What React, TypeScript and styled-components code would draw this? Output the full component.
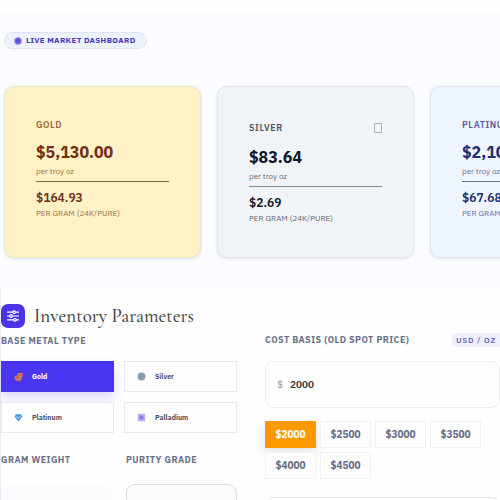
import React, { useState } from "react";
import styled, { createGlobalStyle, css } from "styled-components";

const GlobalStyle = createGlobalStyle`
  * { box-sizing: border-box; }
  body {
    margin: 0;
    background: #fefefe;
    font-family: "IBM Plex Sans", "Noto Sans", sans-serif;
  }
  button, input, select { font-family: inherit; }
`;

const Page = styled.main`
  height: 100vh;
  overflow: hidden;
  padding-top: 12px;
`;

const Market = styled.section`
  display: flex;
  flex-direction: column;
  align-items: flex-start;
  padding: 20px 0 29px 4px;
  background: #fbfcff;
`;

const LiveBadge = styled.div`
  display: flex;
  align-items: center;
  gap: 4px;
  height: 17px;
  padding: 0 10px 0 9px;
  border: 1px solid #dfe4f3;
  border-radius: 9px;
  background: #eef2ff;
  color: #4338b0;
  font-size: 8px;
  line-height: 15px;
  font-weight: 700;
  letter-spacing: 0.04em;
`;

const Dot = styled.span`
  width: 8px;
  height: 8px;
  border: 1px solid #a8a5f1;
  border-radius: 50%;
  background: #5b54dc;
`;

const CardTrack = styled.div`
  display: flex;
  gap: 16px;
  margin-top: 37px;
`;

type Tone = { bg: string; edge: string; label: string; price: string; muted: string; rule: string };

const tones: Record<string, Tone> = {
  gold: { bg: "#fdf1c5", edge: "#eee6cf", label: "#9b6337", price: "#712f14", muted: "#9b7047", rule: "#82694a" },
  silver: { bg: "#f0f4f9", edge: "#e2e6ea", label: "#4c5160", price: "#0e1629", muted: "#62666f", rule: "#858991" },
  platinum: { bg: "#eef5ff", edge: "#dfe5ec", label: "#565f9b", price: "#1e2f72", muted: "#6870a6", rule: "#707584" },
};

const Card = styled.article<{ $tone: Tone }>`
  flex: 0 0 197px;
  min-height: 172px;
  padding: 31px;
  border: 1px solid ${(p) => p.$tone.edge};
  border-radius: 10px;
  background: ${(p) => p.$tone.bg};
  color: ${(p) => p.$tone.price};
  box-shadow: 0 1px 3px rgba(30, 41, 59, 0.12);
  white-space: nowrap;
`;

const CardHead = styled.header<{ $tone: Tone }>`
  display: flex;
  align-items: center;
  justify-content: space-between;
  margin-bottom: 6px;
  color: ${(p) => p.$tone.label};
`;

const MetalName = styled.h2`
  margin: 0;
  font-size: 9px;
  line-height: 14px;
  font-weight: 600;
  letter-spacing: 0.06em;
`;

const GlyphSlot = styled.span`
  display: flex;
  align-items: center;
  height: 19px;
`;

const MissingGlyph = styled.span`
  width: 8px;
  height: 10px;
  border: 1px solid #b0b4bb;
`;

const Price = styled.p`
  margin: 0;
  font-size: 16px;
  line-height: 28px;
  font-weight: 700;
`;

const Unit = styled.p<{ $tone: Tone }>`
  margin: 0;
  padding-bottom: 4px;
  border-bottom: 1px solid ${(p) => p.$tone.rule};
  color: ${(p) => p.$tone.muted};
  font-size: 8px;
  line-height: 11px;
`;

const GramPrice = styled.p`
  margin: 7px 0 0;
  font-size: 12px;
  line-height: 18px;
  font-weight: 600;
`;

const GramUnit = styled.p<{ $tone: Tone }>`
  margin: 0;
  color: ${(p) => p.$tone.muted};
  font-size: 8px;
  line-height: 13px;
`;

const Inventory = styled.section`
  padding-top: 16px;
  border-left: 1px solid #e9ebf2;
  background: #fefefe;
`;

const Heading = styled.header`
  display: flex;
  align-items: center;
  gap: 9px;
  height: 25px;
`;

const IconTile = styled.span`
  display: grid;
  place-items: center;
  width: 24px;
  height: 24px;
  border-radius: 7px;
  background: #4c34e8;
`;

const Title = styled.h1`
  margin: 0;
  color: #484848;
  font-family: "Cormorant Garamond", "Liberation Serif", serif;
  font-size: 19px;
  line-height: 24px;
  font-weight: 500;
`;

const Columns = styled.div`
  display: grid;
  grid-template-columns: 236px minmax(0, 1fr);
  gap: 28px;
`;

const FieldLabel = styled.span`
  display: block;
  color: #68718a;
  font-size: 9px;
  line-height: 14px;
  font-weight: 700;
  letter-spacing: 0.05em;
  white-space: nowrap;
`;

const MetalColumn = styled.div`
  padding-top: 6px;
`;

const MetalGrid = styled.div`
  display: grid;
  grid-template-columns: 1fr 1fr;
  gap: 10px;
  margin-top: 13px;
`;

const MetalButton = styled.button<{ $active: boolean }>`
  display: flex;
  align-items: center;
  gap: 9px;
  height: 31px;
  padding: 0 12px;
  border: 1px solid #e8e9ed;
  border-radius: 0;
  background: #fefefe;
  color: #4c5166;
  font-size: 7px;
  line-height: 12px;
  font-weight: 700;
  ${(p) =>
    p.$active &&
    css`
      border-color: #4634dc;
      background: #4c35f0;
      color: #fff;
      box-shadow: 0 6px 12px rgba(79, 70, 229, 0.2);
    `}
`;

const Fields = styled.div`
  display: grid;
  grid-template-columns: 1fr 1fr;
  gap: 14px;
  margin-top: 20px;
`;

const Field = styled.label`
  display: grid;
  gap: 17px;
`;

const WeightInput = styled.input`
  width: 100%;
  height: 46px;
  padding: 0 12px;
  border: 0;
  border-radius: 9px;
  background: #fbfcfd;
  font-size: 10px;
`;

const PuritySelect = styled.select`
  appearance: none;
  width: 100%;
  height: 46px;
  padding: 0 12px;
  border: 1px solid #d9dcdd;
  border-radius: 9px;
  background: #fafcfc;
  font-size: 10px;
`;

const CostColumn = styled.div`
  padding-top: 5px;
`;

const CostHead = styled.div`
  display: flex;
  align-items: center;
  justify-content: space-between;
`;

const UnitTag = styled.span`
  padding: 0 4px;
  border-radius: 2px;
  background: #eef0ff;
  color: #6c66bd;
  font-size: 8px;
  line-height: 14px;
  font-weight: 600;
  letter-spacing: 0.1em;
  white-space: nowrap;
`;

const MoneyBox = styled.div`
  display: flex;
  align-items: center;
  gap: 7px;
  height: 47px;
  margin-top: 14px;
  padding: 0 11px;
  border: 1px solid #ececee;
  border-radius: 9px;
  color: #8b8f9c;
  font-size: 10px;
`;

const MoneyInput = styled.input`
  flex: 1;
  min-width: 0;
  padding: 0;
  border: 0;
  outline: 0;
  background: transparent;
  color: #333;
  font-size: 10px;
  font-weight: 600;
`;

const Chips = styled.div`
  display: flex;
  flex-wrap: wrap;
  gap: 4px;
  margin: 13px 0 18px;
`;

const Chip = styled.button<{ $active: boolean }>`
  width: 51px;
  height: 27px;
  padding: 0;
  border: 1px solid #f1f2f4;
  background: #fefefe;
  color: #646c86;
  font-size: 10px;
  font-weight: 700;
  ${(p) =>
    p.$active &&
    css`
      border-color: #fb9b04;
      background: #fd9a02;
      color: #fff;
      box-shadow: 0 5px 14px rgba(60, 60, 60, 0.14);
    `}
`;

const NextPanel = styled.div`
  height: 40px;
  border: 1px solid #e2e6e9;
  border-radius: 9px;
`;

const prices = [
  { tone: "gold", name: "GOLD", ounce: "$5,130.00", gram: "$164.93" },
  { tone: "silver", name: "SILVER", ounce: "$83.64", gram: "$2.69", glyph: true },
  { tone: "platinum", name: "PLATINUM", ounce: "$2,105.00", gram: "$67.68" },
];

const icons: Record<string, React.ReactNode> = {
  Gold: (
    <>
      <path d="M3.6 1.2 8.6.8v3.5L7.4 5.9 7 8.4l-4.7.4L.7 7.1V4.3l2.4-.5z" fill="#d88357" />
      <path d="m3.6 3.1 4.6-.4M1.2 6.1l5.2-.5M3.2 3.9l.3 2" stroke="#7d455e" strokeWidth=".6" />
    </>
  ),
  Silver: <circle cx="4.5" cy="4.5" r="3.9" fill="#8c9baa" />,
  Platinum: (
    <>
      <path d="M2.1 1.3h4.8l1.6 2.3-4 4.9-4-4.9z" fill="#4b98e2" />
      <path d="m2.3 3.7 2.2 1.1 2.2-1.1" fill="none" stroke="#c5e6ff" strokeWidth=".9" />
    </>
  ),
  Palladium: (
    <>
      <rect x=".8" y=".8" width="7.4" height="7.4" rx="1" fill="#b4acf5" />
      <circle cx="4.5" cy="4.5" r="2.1" fill="#8b7de6" />
    </>
  ),
};

function SlidersIcon() {
  return (
    <svg width="14" height="14" viewBox="0 0 14 14" fill="none" stroke="#fff" strokeWidth="1.2" strokeLinecap="round" aria-hidden="true">
      <path d="M1.5 3.2h11M1.5 7h11M1.5 10.8h11" />
      <g fill="#4c34e8">
        <circle cx="8" cy="3.2" r="1.3" />
        <circle cx="5" cy="7" r="1.3" />
        <circle cx="9" cy="10.8" r="1.3" />
      </g>
    </svg>
  );
}

export default function App() {
  const [metal, setMetal] = useState("Gold");
  const [cost, setCost] = useState("2000");

  return (
    <>
      <GlobalStyle />
      <Page>
        <Market>
          <LiveBadge>
            <Dot />
            LIVE MARKET DASHBOARD
          </LiveBadge>
          <CardTrack>
            {prices.map((p) => {
              const tone = tones[p.tone];
              return (
                <Card key={p.name} $tone={tone}>
                  <CardHead $tone={tone}>
                    <MetalName>{p.name}</MetalName>
                    {p.glyph && (
                      <GlyphSlot>
                        <MissingGlyph />
                      </GlyphSlot>
                    )}
                  </CardHead>
                  <Price>{p.ounce}</Price>
                  <Unit $tone={tone}>per troy oz</Unit>
                  <GramPrice>{p.gram}</GramPrice>
                  <GramUnit $tone={tone}>PER GRAM (24K/PURE)</GramUnit>
                </Card>
              );
            })}
          </CardTrack>
        </Market>
        <Inventory>
          <Heading>
            <IconTile>
              <SlidersIcon />
            </IconTile>
            <Title>Inventory Parameters</Title>
          </Heading>
          <Columns>
            <MetalColumn>
              <FieldLabel id="metal-label">BASE METAL TYPE</FieldLabel>
              <MetalGrid role="group" aria-labelledby="metal-label">
                {Object.keys(icons).map((name) => (
                  <MetalButton key={name} type="button" $active={metal === name} aria-pressed={metal === name} onClick={() => setMetal(name)}>
                    <svg width="9" height="9" viewBox="0 0 9 9" aria-hidden="true">
                      {icons[name]}
                    </svg>
                    {name}
                  </MetalButton>
                ))}
              </MetalGrid>
              <Fields>
                <Field>
                  <FieldLabel>GRAM WEIGHT</FieldLabel>
                  <WeightInput type="text" />
                </Field>
                <Field>
                  <FieldLabel>PURITY GRADE</FieldLabel>
                  <PuritySelect />
                </Field>
              </Fields>
            </MetalColumn>
            <CostColumn>
              <CostHead>
                <FieldLabel as="label" htmlFor="cost">
                  COST BASIS (OLD SPOT PRICE)
                </FieldLabel>
                <UnitTag>USD / OZ</UnitTag>
              </CostHead>
              <MoneyBox>
                <span>$</span>
                <MoneyInput id="cost" value={cost} onChange={(e) => setCost(e.target.value)} />
              </MoneyBox>
              <Chips>
                {["2000", "2500", "3000", "3500", "4000", "4500"].map((v) => (
                  <Chip key={v} type="button" $active={cost === v} onClick={() => setCost(v)}>
                    ${v}
                  </Chip>
                ))}
              </Chips>
              <NextPanel />
            </CostColumn>
          </Columns>
        </Inventory>
      </Page>
    </>
  );
}
